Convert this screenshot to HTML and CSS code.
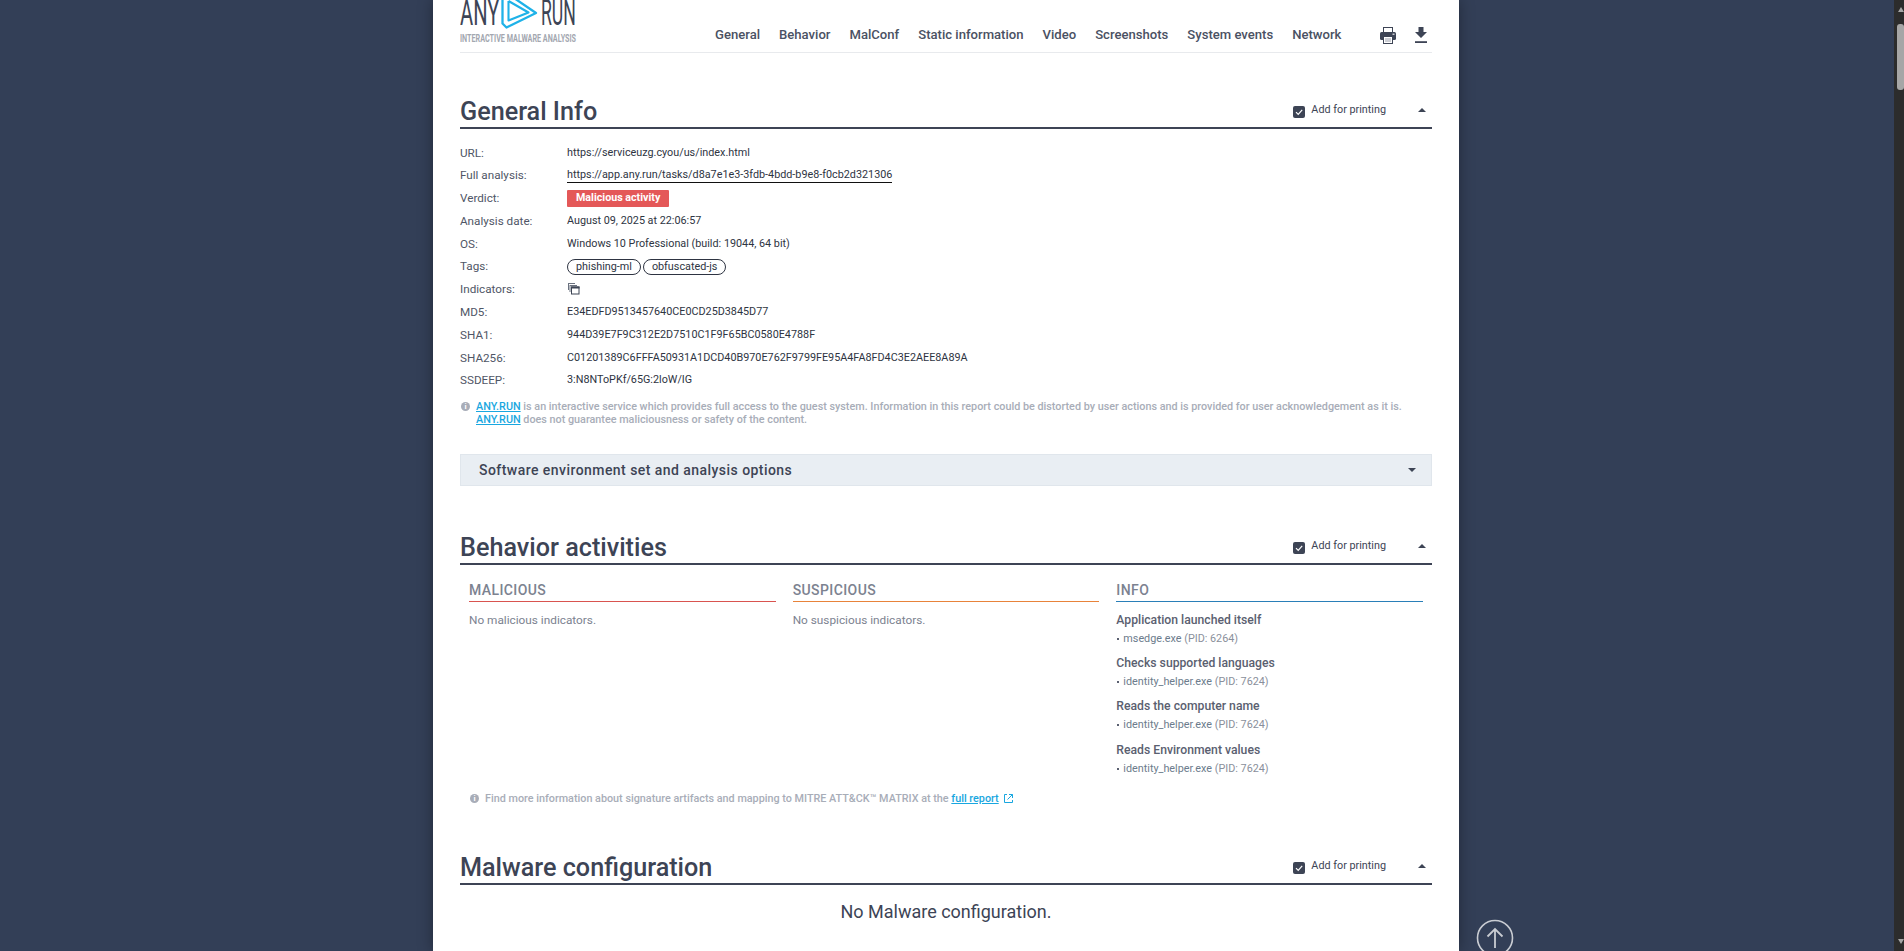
FILE: index.html
```html
<!DOCTYPE html>
<html>
<head>
	<title>ANY.RUN report</title>
	<link rel="stylesheet" href="styles.css">
</head>
<body>
	<div class="page">
		<div class="sheet">
			<div class="topbar">
				<div class="logo">
					<div class="logoMark">
						<span class="logoWord any">ANY</span>
						<svg class="logoPlay" width="40" height="30" viewBox="0 0 40 30">
							<path d="M3.5 -2V23.5L7.5 27.5L37 13L15 -2" fill="none" stroke="#1fb2e8" stroke-width="2.3" stroke-linejoin="round"/>
							<path d="M9.5 1V20.5L29.5 12.5L9.5 1" fill="none" stroke="#1fb2e8" stroke-width="2.1" stroke-linejoin="round"/>
						</svg>
						<span class="logoWord run">RUN</span>
					</div>
					<div class="logoSub">INTERACTIVE MALWARE ANALYSIS</div>
				</div>
				<div class="nav">
					<span>General</span>
					<span>Behavior</span>
					<span>MalConf</span>
					<span>Static information</span>
					<span>Video</span>
					<span>Screenshots</span>
					<span>System events</span>
					<span>Network</span>
				</div>
				<div class="tools">
					<svg width="16" height="17" viewBox="0 0 16 17">
						<rect x="3.5" y="0.5" width="9" height="5" fill="#fff" stroke="#3d4455"/>
						<rect x="0" y="5" width="16" height="8" rx="1.5" fill="#3d4455"/>
						<rect x="3.5" y="9.5" width="9" height="7" fill="#fff" stroke="#3d4455"/>
						<path d="M5 12H11M5 14H11" stroke="#9a9eaa"/>
						<rect x="12.5" y="6.5" width="2" height="1.5" fill="#c9ccd2"/>
					</svg>
					<svg width="12" height="16" viewBox="0 0 12 16">
						<path fill="#3d4455" d="M3.5 0H8.5V5H12L6 11L0 5H3.5Z"/>
						<rect x="0" y="14.2" width="12" height="1.8" fill="#3d4455"/>
					</svg>
				</div>
			</div>

			<div class="secHead first">
				<h2>General Info</h2>
				<label class="printBox"><span class="check"><svg width="10" height="10" viewBox="0 0 10 10"><path d="M2 5.2L4.2 7.4L8.2 2.8" fill="none" stroke="#fff" stroke-width="1.2"/></svg></span>Add for printing</label>
				<span class="caretUp"></span>
			</div>

			<div class="info">
				<div class="row"><div class="lbl">URL:</div><div class="val">https://serviceuzg.cyou/us/index.html</div></div>
				<div class="row"><div class="lbl">Full analysis:</div><div class="val"><span class="taskLink">https://app.any.run/tasks/d8a7e1e3-3fdb-4bdd-b9e8-f0cb2d321306</span></div></div>
				<div class="row"><div class="lbl">Verdict:</div><div class="val"><span class="verdict">Malicious activity</span></div></div>
				<div class="row"><div class="lbl">Analysis date:</div><div class="val">August 09, 2025 at 22:06:57</div></div>
				<div class="row"><div class="lbl">OS:</div><div class="val">Windows 10 Professional (build: 19044, 64 bit)</div></div>
				<div class="row"><div class="lbl">Tags:</div><div class="val"><span class="tag">phishing-ml</span><span class="tag">obfuscated-js</span></div></div>
				<div class="row"><div class="lbl">Indicators:</div><div class="val"><svg class="indIcon" width="13" height="13" viewBox="0 0 13 13"><path d="M1 1H8V2H1zM1 2H2V8H1zM2.5 3H10V4H2.5zM2.5 4H3.5V10H2.5z" fill="#6b7280"/><rect x="4.5" y="5" width="7.5" height="7" fill="none" stroke="#3d4455"/><rect x="4" y="4.5" width="8.5" height="2" fill="#3d4455"/></svg></div></div>
				<div class="row"><div class="lbl">MD5:</div><div class="val">E34EDFD9513457640CE0CD25D3845D77</div></div>
				<div class="row"><div class="lbl">SHA1:</div><div class="val">944D39E7F9C312E2D7510C1F9F65BC0580E4788F</div></div>
				<div class="row"><div class="lbl">SHA256:</div><div class="val">C01201389C6FFFA50931A1DCD40B970E762F9799FE95A4FA8FD4C3E2AEE8A89A</div></div>
				<div class="row"><div class="lbl">SSDEEP:</div><div class="val">3:N8NToPKf/65G:2loW/IG</div></div>
			</div>

			<div class="note">
				<span class="infoDot">i</span>
				<div><a class="blue">ANY.RUN</a> is an interactive service which provides full access to the guest system. Information in this report could be distorted by user actions and is provided for user acknowledgement as it is.<br><a class="blue">ANY.RUN</a> does not guarantee maliciousness or safety of the content.</div>
			</div>

			<div class="envBar">
				<span>Software environment set and analysis options</span>
				<span class="caretDown"></span>
			</div>

			<div class="secHead second">
				<h2>Behavior activities</h2>
				<label class="printBox"><span class="check"><svg width="10" height="10" viewBox="0 0 10 10"><path d="M2 5.2L4.2 7.4L8.2 2.8" fill="none" stroke="#fff" stroke-width="1.2"/></svg></span>Add for printing</label>
				<span class="caretUp"></span>
			</div>

			<div class="cols">
				<div class="col">
					<div class="colTitle red">MALICIOUS</div>
					<div class="none">No malicious indicators.</div>
				</div>
				<div class="col">
					<div class="colTitle orange">SUSPICIOUS</div>
					<div class="none">No suspicious indicators.</div>
				</div>
				<div class="col">
					<div class="colTitle bluish">INFO</div>
					<div class="item"><b>Application launched itself</b><p><i></i><span>msedge.exe</span> (PID: 6264)</p></div>
					<div class="item"><b>Checks supported languages</b><p><i></i><span>identity_helper.exe</span> (PID: 7624)</p></div>
					<div class="item"><b>Reads the computer name</b><p><i></i><span>identity_helper.exe</span> (PID: 7624)</p></div>
					<div class="item"><b>Reads Environment values</b><p><i></i><span>identity_helper.exe</span> (PID: 7624)</p></div>
				</div>
			</div>

			<div class="note matrix">
				<span class="infoDot">i</span>
				<div>Find more information about signature artifacts and mapping to MITRE ATT&amp;CK™ MATRIX at the <a class="blue">full report</a>
				<svg class="ext" width="11" height="11" viewBox="0 0 11 11"><path d="M4 1.5H1.5V9.5H9.5V7M6 1.5H9.5V5M9.5 1.5L4.5 6.5" fill="none" stroke="#19a7e0" stroke-width="1"/></svg></div>
			</div>

			<div class="secHead third">
				<h2>Malware configuration</h2>
				<label class="printBox"><span class="check"><svg width="10" height="10" viewBox="0 0 10 10"><path d="M2 5.2L4.2 7.4L8.2 2.8" fill="none" stroke="#fff" stroke-width="1.2"/></svg></span>Add for printing</label>
				<span class="caretUp"></span>
			</div>
			<div class="noConfig">No Malware configuration.</div>
		</div>

		<svg class="toTop" width="38" height="38" viewBox="0 0 38 38"><circle cx="19" cy="19" r="17.5" fill="none" stroke="#c9ccd2" stroke-width="1.6"/><path d="M19 29V10M11.5 17.5L19 10L26.5 17.5" fill="none" stroke="#c9ccd2" stroke-width="1.8"/></svg>
	</div>

	<div class="scrollbar">
		<div class="arrowUp"></div>
		<div class="thumb"></div>
		<div class="arrowDown"></div>
	</div>
</body>
</html>
```

FILE: styles.css
```css
html, body {
	margin: 0;
	height: 951px;
	overflow: hidden;
}

body {
	display: flex;
	background: #333f57;
	font-family: Roboto, "Liberation Sans", sans-serif;
	color: #3d4455;
}

.page {
	flex: 1;
	height: 951px;
	padding-right: 2px;
	display: flex;
	justify-content: center;
	position: relative;
	overflow: hidden;
}

.sheet {
	width: 1026px;
	height: 951px;
	padding: 0 27px;
	box-sizing: border-box;
	background: #fff;
	box-shadow: 0 0 14px rgba(0, 0, 0, .35);
	overflow: hidden;
}

/* top bar */
.topbar {
	height: 52px;
	border-bottom: 1px solid #e8eaed;
	display: flex;
	align-items: flex-end;
}

.logo {
	width: 255px;
	height: 52px;
}

.logoMark {
	display: flex;
	height: 30px;
}

.logoWord {
	font-size: 36px;
	line-height: 34px;
	margin-top: -4px;
	height: 34px;
	display: inline-block;
	transform-origin: left top;
	color: #3d4455;
	white-space: nowrap;
}

.any {
	width: 39px;
	transform: scaleX(.56);
}

.run {
	width: 36px;
	margin-left: 2px;
	transform: scaleX(.49);
}

.logoPlay {
	flex: none;
}

.logoSub {
	margin-top: 3px;
	font-size: 10px;
	line-height: 11px;
	font-weight: 700;
	color: #a3a7b0;
	white-space: nowrap;
	transform: scaleX(.72);
	transform-origin: left top;
	width: 170px;
}

.nav {
	display: flex;
	gap: 19px;
	height: 35px;
	font-size: 13.1px;
	font-weight: 500;
	line-height: 36px;
	color: #4a5163;
	white-space: nowrap;
}

.tools {
	margin-left: auto;
	display: flex;
	align-items: flex-start;
	gap: 19px;
	height: 35px;
	padding: 10px 5px 0 0;
	box-sizing: border-box;
}

/* section heads */
.secHead {
	height: 36px;
	box-sizing: border-box;
	border-bottom: 2px solid #3d4455;
	display: flex;
	align-items: center;
}

.secHead.first {
	margin-top: 40px;
}

.secHead.second {
	margin-top: 43px;
}

.secHead.third {
	margin-top: 44px;
}

.secHead h2 {
	margin: 4px 0 0;
	flex: 1;
	font-size: 25.2px;
	font-weight: 500;
	line-height: 30px;
	color: #3d4455;
}

.printBox {
	display: flex;
	align-items: flex-start;
	font-size: 10.8px;
	line-height: 14px;
	color: #3d4455;
	margin: 1px 32px 0 0;
}

.check {
	width: 12px;
	height: 12px;
	border-radius: 2px;
	background: #3d4455;
	margin: 3px 6px 0 0;
	display: flex;
	align-items: center;
	justify-content: center;
}

.caretUp, .caretDown {
	width: 0;
	height: 0;
	border-left: 4px solid transparent;
	border-right: 4px solid transparent;
}

.caretUp {
	border-bottom: 4px solid #3d4455;
	margin-right: 6px;
}

.caretDown {
	border-top: 4px solid #3d4455;
}

/* general info rows */
.info {
	padding-top: 13.5px;
}

.row {
	display: flex;
	height: 22.8px;
	font-size: 11.7px;
}

.lbl {
	width: 107px;
	line-height: 21px;
	color: #4f5666;
}

.val {
	font-size: 10.8px;
	line-height: 20px;
	color: #2e3442;
}

.taskLink {
	border-bottom: 1px solid #111;
	padding-bottom: 1px;
}

.verdict {
	display: inline-block;
	height: 17px;
	margin-top: 2px;
	padding: 0 9px;
	line-height: 15px;
	background: #e45858;
	border-radius: 1px;
	color: #fff;
	font-weight: 700;
	font-size: 10.7px;
}

.tag {
	display: inline-block;
	height: 16px;
	line-height: 13px;
	margin-top: 3px;
	padding: 0 8px;
	border: 1px solid #2e3442;
	border-radius: 8px;
	margin-right: 2px;
	box-sizing: border-box;
}

.indIcon {
	display: block;
	margin-top: 3px;
}

/* notes */
.note {
	display: flex;
	margin-top: 7px;
	font-size: 10.8px;
	line-height: 13px;
	font-weight: 500;
	color: #a8adb8;
}

.infoDot {
	width: 9px;
	height: 9px;
	margin: 2px 6px 0 1px;
	flex: none;
	border-radius: 50%;
	background: #a8adb8;
	color: #fff;
	font-size: 8px;
	line-height: 9px;
	text-align: center;
	font-weight: 700;
}

.blue {
	color: #19a7e0;
	text-decoration: underline;
}

.envBar {
	margin-top: 28px;
	height: 32px;
	box-sizing: border-box;
	padding: 0 15px 0 18px;
	background: #e9eef3;
	border: 1px solid #e0e6ec;
	display: flex;
	align-items: center;
	justify-content: space-between;
	font-size: 14px;
	font-weight: 500;
	letter-spacing: .45px;
	color: #3d4455;
}

/* behavior columns */
.cols {
	display: flex;
	gap: 17px;
	padding: 0 9px;
	height: 227px;
}

.col {
	flex: 1;
}

.colTitle {
	height: 37px;
	box-sizing: border-box;
	padding-top: 17px;
	line-height: 16px;
	font-size: 14px;
	font-weight: 500;
	letter-spacing: .4px;
	color: #7c8290;
	border-bottom: 1px solid;
}

.red {
	border-color: #d9534f;
}

.orange {
	border-color: #e8833a;
}

.bluish {
	border-color: #2a7fb8;
}

.none {
	margin-top: 10.5px;
	font-size: 11.8px;
	line-height: 15px;
	color: #7c8290;
}

.item {
	margin-top: 9.3px;
	height: 34px;
}

.colTitle + .item {
	margin-top: 10.5px;
}

.item b {
	display: block;
	font-size: 12.2px;
	font-weight: 500;
	line-height: 15px;
	color: #5a6070;
}

.item p {
	margin: 4px 0 0;
	font-size: 10.8px;
	line-height: 14px;
	color: #8a8f9b;
}

.item i {
	display: inline-block;
	width: 2px;
	height: 2px;
	margin: 0 4px 2px 1px;
	background: #5a6070;
}

.item span {
	color: #6c7c8c;
}

.matrix {
	margin-top: 0;
	padding-left: 9px;
}

.ext {
	margin-left: 2px;
	vertical-align: -2px;
}

.noConfig {
	margin-top: 16px;
	text-align: center;
	font-size: 18px;
	line-height: 22px;
	color: #3d4455;
}

/* overlay button */
.toTop {
	position: absolute;
	left: 1476px;
	top: 919px;
}

/* scrollbar */
.scrollbar {
	width: 10px;
	height: 951px;
	flex: none;
	background: #2c2c2c;
	position: relative;
}

.thumb {
	position: absolute;
	left: 3px;
	right: 0;
	top: 24px;
	height: 66px;
	border-radius: 3px;
	background: #a6a6a6;
}

.arrowUp, .arrowDown {
	position: absolute;
	right: 0;
	width: 0;
	height: 0;
	border-left: 3px solid transparent;
	border-right: 3px solid transparent;
}

.arrowUp {
	top: 7px;
	border-bottom: 5px solid #a6a6a6;
}

.arrowDown {
	bottom: 7px;
	border-top: 5px solid #a6a6a6;
}
```
